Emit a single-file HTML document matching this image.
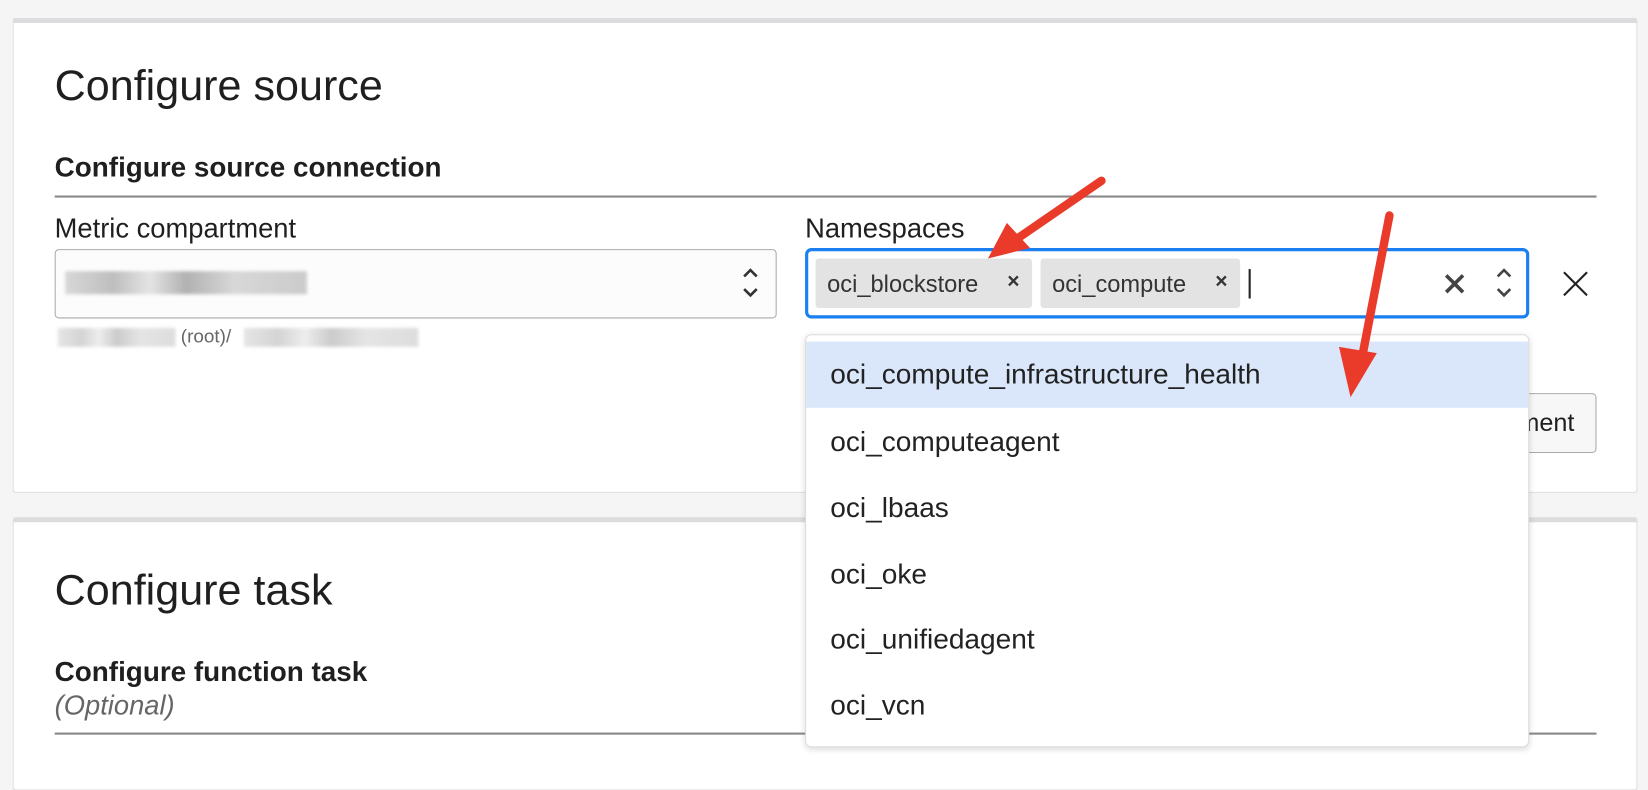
<!DOCTYPE html>
<html><head><meta charset="utf-8"><style>
*{box-sizing:border-box;margin:0;padding:0}
html,body{width:1648px;height:768px;overflow:hidden;background:#f5f5f5}
#w{position:absolute;left:0;top:0;width:1568px;height:731px;transform:scale(1.05102);transform-origin:0 0;font-family:"Liberation Sans",sans-serif;color:#1f1f1f}
.a{position:absolute}
.card{position:absolute;left:12px;width:1546px;background:#fff;border:1px solid #ddd;border-top:5px solid #dcdcdf;border-radius:3px}
.blur{position:absolute;background:linear-gradient(90deg,#ccc,#aaa 20%,#ddd 35%,#999 50%,#ccc 70%,#bbb);filter:blur(1.5px);opacity:.75}
.chip{position:absolute;top:246px;height:47px;background:#e3e3e3;border-radius:3px;font-size:22.5px;line-height:49px;padding-left:11px;color:#333;white-space:nowrap}
.chip b{position:absolute;right:12px;top:-2px;font-size:20px}
.item{position:absolute;left:0;width:100%;height:63px;line-height:63px;padding-left:23px;font-size:26.7px;color:#222;white-space:nowrap}
</style></head><body><div id="w">
<div class="card" style="top:17px;height:452px"></div>
<div class="card" style="top:492px;height:260px"></div>
<div class="a" style="left:52px;top:58px;font-size:41px">Configure source</div>
<div class="a" style="left:52px;top:144px;font-size:26.5px;font-weight:bold">Configure source connection</div>
<div class="a" style="left:52px;top:186px;width:1467px;height:2px;background:#888"></div>
<div class="a" style="left:52px;top:202px;font-size:26px">Metric compartment</div>
<div class="a" style="left:52px;top:237px;width:687px;height:66px;border:1px solid #aaa;border-radius:4px;background:#fcfcfc"></div>
<div class="blur" style="left:62px;top:258px;width:230px;height:22px"></div>
<svg class="a" style="left:704px;top:253px" width="20" height="32"><path d="M4 10l6-6 6 6M4 22l6 6 6-6" fill="none" stroke="#333" stroke-width="2.5"/></svg>
<div class="blur" style="left:55px;top:312px;width:112px;height:18px;opacity:.5"></div>
<div class="a" style="left:172px;top:310px;font-size:18px;color:#666">(root)/</div>
<div class="blur" style="left:232px;top:312px;width:166px;height:18px;opacity:.5"></div>
<div class="a" style="left:766px;top:202px;font-size:26px">Namespaces</div>
<div class="a" style="left:766px;top:236px;width:689px;height:67px;border:3px solid #1a7ff0;border-radius:6px"></div>
<div class="chip" style="left:776px;width:206px">oci_blockstore<b>×</b></div>
<div class="chip" style="left:990px;width:190px">oci_compute<b>×</b></div>
<div class="a" style="left:1188px;top:256px;width:2px;height:28px;background:#222"></div>
<svg class="a" style="left:1373px;top:259px" width="22" height="22"><path d="M3 3l16 16M19 3L3 19" stroke="#444" stroke-width="3.5"/></svg>
<svg class="a" style="left:1421px;top:253px" width="20" height="32"><path d="M4 10l6-6 6 6M4 22l6 6 6-6" fill="none" stroke="#444" stroke-width="2.5"/></svg>
<svg class="a" style="left:1486px;top:257px" width="26" height="26"><path d="M2 2l22 22M24 2L2 24" stroke="#222" stroke-width="2"/></svg>
<div class="a" style="left:1400px;top:374px;width:119px;height:57px;border:1px solid #aaa;border-radius:4px;background:#f7f7f7;font-size:24px;line-height:55px;text-align:right;padding-right:20px">ment</div>
<div class="a" style="left:766px;top:318px;width:689px;height:393px;background:#fff;border:1px solid #ddd;border-radius:6px;box-shadow:0 2px 6px rgba(0,0,0,.15)">
<div class="item" style="top:6px;background:#dae7fb">oci_compute_infrastructure_health</div>
<div class="item" style="top:70px">oci_computeagent</div>
<div class="item" style="top:133px">oci_lbaas</div>
<div class="item" style="top:196px">oci_oke</div>
<div class="item" style="top:258px">oci_unifiedagent</div>
<div class="item" style="top:321px">oci_vcn</div>
</div>
<div class="a" style="left:52px;top:538px;font-size:41px">Configure task</div>
<div class="a" style="left:52px;top:624px;font-size:26.5px;font-weight:bold">Configure function task</div>
<div class="a" style="left:52px;top:656px;font-size:26px;font-style:italic;color:#666">(Optional)</div>
<div class="a" style="left:52px;top:697px;width:714px;height:2px;background:#888"></div>
<div class="a" style="left:1455px;top:697px;width:64px;height:2px;background:#888"></div>
<svg class="a" style="left:0;top:0" width="1568" height="731">
<line x1="1048" y1="172" x2="968" y2="227" stroke="#ea3a2a" stroke-width="8" stroke-linecap="round"/>
<polygon points="940,246 958,212 980,236" fill="#ea3a2a"/>
<line x1="1322" y1="205" x2="1295" y2="345" stroke="#ea3a2a" stroke-width="8" stroke-linecap="round"/>
<polygon points="1285,378 1274,330 1310,336" fill="#ea3a2a"/>
</svg>
</div></body></html>
